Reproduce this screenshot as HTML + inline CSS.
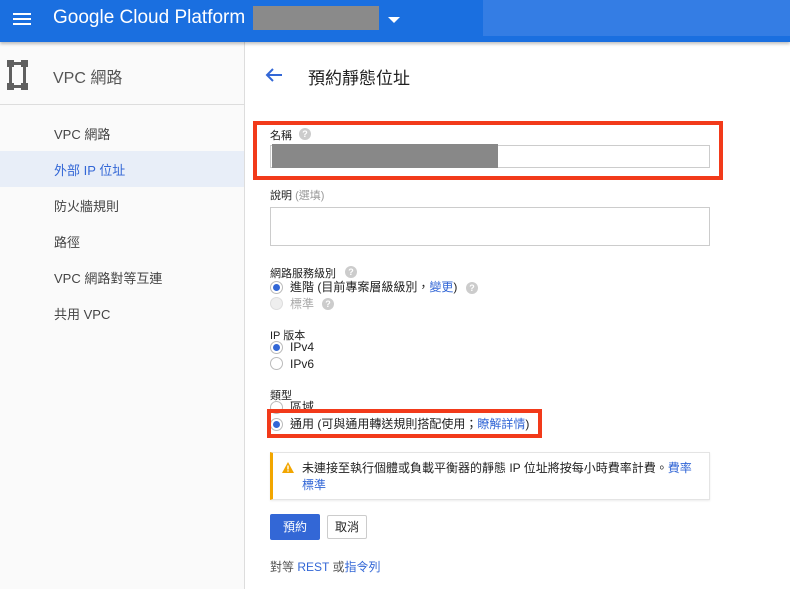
<!DOCTYPE html>
<html><head><meta charset="utf-8"><style>
*{margin:0;padding:0;box-sizing:border-box}
body{width:790px;height:589px;overflow:hidden;font-family:"Liberation Sans","Noto Sans CJK TC",sans-serif;background:#fff;color:#212121;position:relative}
.a{position:absolute}
.hdr{left:0;top:0;width:790px;height:42px;background:#1a6fe0;box-shadow:0 2px 3px rgba(0,0,0,.25);z-index:2}
.side{left:0;top:42px;width:245px;height:547px;background:#fafafa;border-right:1px solid #ddd}
.si{left:54px;font-size:13px;color:#444}
.lbl{font-size:11px;color:#212121}
.rad{width:13px;height:13px;border-radius:50%;border:1px solid #bbb;background:#fff}
.rad.on::after{content:"";position:absolute;left:2px;top:2px;width:7px;height:7px;border-radius:50%;background:#3367d6}
.q{width:12px;height:12px;border-radius:50%;background:#ccc;color:#fff;font-size:9px;font-weight:bold;text-align:center;line-height:12px}
.t{font-size:12px;color:#212121;line-height:14px}
.lk{color:#3367d6}
.red{border:4px solid #f23a1a}
</style></head><body>
<div class="a hdr">
  <div class="a" style="left:13px;top:13px;width:18px;height:2px;background:#fff;box-shadow:0 5px 0 #fff,0 10px 0 #fff"></div>
  <div class="a" style="left:53px;top:7px;font-size:19px;color:#fff">Google Cloud Platform</div>
  <div class="a" style="left:253px;top:6px;width:126px;height:24px;background:#8a8a8a"></div>
  <div class="a" style="left:388px;top:17px;width:0;height:0;border-left:6px solid transparent;border-right:6px solid transparent;border-top:6px solid #fff"></div>
  <div class="a" style="left:483px;top:0;width:307px;height:36px;background:#347de4"></div>
</div>
<div class="a side">
  <div class="a" style="left:0;top:0;width:245px;height:63px;border-bottom:1px solid #ddd"></div>
  <svg class="a" style="left:7px;top:18px" width="24" height="30" viewBox="0 0 24 30"><g fill="#5f5f5f"><rect x="0" y="0" width="7" height="7"/><rect x="14" y="0" width="7" height="7"/><rect x="0" y="23" width="7" height="7"/><rect x="14" y="23" width="7" height="7"/><rect x="2" y="7" width="3" height="16"/><rect x="16" y="7" width="3" height="16"/><rect x="7" y="2" width="7" height="3"/><rect x="7" y="25" width="7" height="3"/></g></svg>
  <div class="a" style="left:53px;top:22px;font-size:16px;color:#555">VPC 網路</div>
  <div class="a" style="left:0;top:109px;width:244px;height:36px;background:#e8eef8"></div>
</div>
<div class="a si" style="top:124px">VPC 網路</div>
<div class="a si" style="top:160px;color:#3367d6">外部 IP 位址</div>
<div class="a si" style="top:196px">防火牆規則</div>
<div class="a si" style="top:232px">路徑</div>
<div class="a si" style="top:268px">VPC 網路對等互連</div>
<div class="a si" style="top:304px">共用 VPC</div>

<svg class="a" style="left:265px;top:67px" width="18" height="16" viewBox="0 0 18 16"><path d="M17 8H2M8 2L2 8l6 6" stroke="#3367d6" stroke-width="2" fill="none"/></svg>
<div class="a" style="left:308px;top:64px;font-size:17px;color:#212121">預約靜態位址</div>

<div class="a red" style="left:253px;top:121px;width:470px;height:59px"></div>
<div class="a lbl" style="left:270px;top:127px">名稱</div>
<div class="a q" style="left:299px;top:128px">?</div>
<div class="a" style="left:270px;top:145px;width:440px;height:23px;border:1px solid #ccc"></div>
<div class="a" style="left:272px;top:144px;width:226px;height:24px;background:#888"></div>

<div class="a lbl" style="left:270px;top:187px">說明 <span style="color:#999">(選填)</span></div>
<div class="a" style="left:270px;top:207px;width:440px;height:39px;border:1px solid #ccc"></div>

<div class="a lbl" style="left:270px;top:265px">網路服務級別</div>
<div class="a q" style="left:345px;top:266px">?</div>
<div class="a rad on" style="left:270px;top:281px"></div>
<div class="a t" style="left:290px;top:280px">進階 (目前專案層級級別，<span class="lk">變更</span>)</div>
<div class="a q" style="left:466px;top:282px">?</div>
<div class="a rad" style="left:270px;top:297px;background:#eee;border-color:#ddd"></div>
<div class="a t" style="left:290px;top:297px;color:#aaa">標準</div>
<div class="a q" style="left:322px;top:298px">?</div>

<div class="a lbl" style="left:270px;top:327px">IP 版本</div>
<div class="a rad on" style="left:270px;top:341px"></div>
<div class="a t" style="left:290px;top:340px">IPv4</div>
<div class="a rad" style="left:270px;top:357px"></div>
<div class="a t" style="left:290px;top:357px">IPv6</div>

<div class="a lbl" style="left:270px;top:387px">類型</div>
<div class="a rad" style="left:270px;top:401px"></div>
<div class="a t" style="left:290px;top:400px">區域</div>
<div class="a rad on" style="left:270px;top:418px"></div>
<div class="a t" style="left:290px;top:417px">通用 (可與通用轉送規則搭配使用；<span class="lk">瞭解詳情</span>)</div>
<div class="a red" style="left:267px;top:409px;width:275px;height:29px"></div>

<div class="a" style="left:270px;top:452px;width:440px;height:48px;border:1px solid #e4e4e4;border-left:3px solid #f2a600;box-shadow:0 1px 2px rgba(0,0,0,.08)"></div>
<svg class="a" style="left:282px;top:462px" width="12" height="11" viewBox="0 0 12 11"><path d="M6 0L12 11H0z" fill="#f2a600"/><rect x="5.3" y="3.5" width="1.4" height="4" fill="#fff"/><rect x="5.3" y="8.3" width="1.4" height="1.3" fill="#fff"/></svg>
<div class="a t" style="left:302px;top:460px;width:402px;line-height:17px">未連接至執行個體或負載平衡器的靜態 IP 位址將按每小時費率計費。<span class="lk">費率<br>標準</span></div>

<div class="a" style="left:270px;top:514px;width:50px;height:26px;background:#3367d6;border-radius:2px;color:#fff;font-size:12px;text-align:center;line-height:26px">預約</div>
<div class="a" style="left:327px;top:515px;width:40px;height:24px;border:1px solid #ccc;border-radius:2px;font-size:12px;text-align:center;line-height:22px">取消</div>
<div class="a t" style="left:270px;top:560px;color:#555">對等 <span class="lk">REST</span> 或<span class="lk">指令列</span></div>
</body></html>
